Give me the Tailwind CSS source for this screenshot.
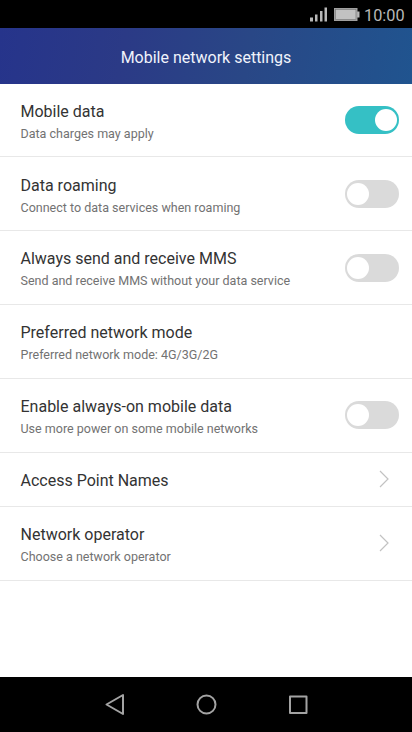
<!DOCTYPE html>
<html lang="en">
<head>
<meta charset="utf-8">
<title>Mobile network settings</title>
<script src="https://cdn.jsdelivr.net/npm/@tailwindcss/browser@4"></script>
</head>
<body class="w-[412px] h-[732px] overflow-hidden flex flex-col bg-white font-[Roboto,sans-serif]">
<div class="h-[28px] shrink-0 bg-black flex justify-end pr-[7px]">
  <svg class="w-[54px] h-[28px]" viewBox="310 0 54 28">
    <g fill="#b8b8b8"><rect x="310" y="17.500" width="3" height="4"/><rect x="315" y="14.500" width="2.500" height="7"/><rect x="320" y="11" width="2.500" height="10.500"/><rect x="324.500" y="7.500" width="2.500" height="14"/><rect x="357" y="11.500" width="2.500" height="6"/></g>
    <rect x="334.500" y="8.500" width="22.500" height="12" fill="#c2c2c2" stroke="#a0a0a0"/>
    <rect x="335.500" y="9.500" width="20.500" height="10" fill="none" stroke="#777" stroke-width=".7"/>
  </svg>
  <span class="w-[41px] whitespace-nowrap text-[16.300px] leading-[31px] text-[#b8b8b8]">10:00</span>
</div>
<header class="h-[55.500px] shrink-0 bg-linear-[100deg,#26348b_0%,#2b3a86_30%,#294786_60%,#20548f_100%] flex justify-center">
  <h1 class="text-[16px] leading-[59px] text-[#f0f3fb]">Mobile network settings</h1>
</header>
<main class="flex-1 flex flex-col text-[#333]">
  <section class="h-[73.850px] shrink-0 border-b border-[#e8e8e8] pl-[20.500px] pr-[13px] flex justify-between items-center">
    <div class="pt-[5px]"><h2 class="text-[16px] leading-[22px]">Mobile data</h2><p class="text-[12.520px] leading-[21px] text-[#727272]">Data charges may apply</p></div>
    <div class="w-[54px] h-[28px] rounded-full bg-[#35c0c5] flex items-center justify-end pr-[2.500px]"><span class="size-[22px] rounded-full bg-white"></span></div>
  </section>
  <section class="h-[73.850px] shrink-0 border-b border-[#e8e8e8] pl-[20.500px] pr-[13px] flex justify-between items-center">
    <div class="pt-[5px]"><h2 class="text-[16px] leading-[22px]">Data roaming</h2><p class="text-[12.520px] leading-[21px] text-[#727272]">Connect to data services when roaming</p></div>
    <div class="w-[54px] h-[28px] rounded-full bg-[#dadada] flex items-center pl-[2px]"><span class="size-[22px] rounded-full bg-white"></span></div>
  </section>
  <section class="h-[73.850px] shrink-0 border-b border-[#e8e8e8] pl-[20.500px] pr-[13px] flex justify-between items-center">
    <div class="pt-[4px]"><h2 class="text-[16px] leading-[22px]">Always send and receive MMS</h2><p class="text-[12.520px] leading-[21px] text-[#727272]">Send and receive MMS without your data service</p></div>
    <div class="w-[54px] h-[28px] rounded-full bg-[#dadada] flex items-center pl-[2px]"><span class="size-[22px] rounded-full bg-white"></span></div>
  </section>
  <section class="h-[73.850px] shrink-0 border-b border-[#e8e8e8] pl-[20.500px] pr-[13px] flex justify-between items-center">
    <div class="pt-[4px]"><h2 class="text-[16px] leading-[22px]">Preferred network mode</h2><p class="text-[12.520px] leading-[21px] text-[#727272]">Preferred network mode: 4G/3G/2G</p></div>
  </section>
  <section class="h-[73.850px] shrink-0 border-b border-[#e8e8e8] pl-[20.500px] pr-[13px] flex justify-between items-center">
    <div class="pt-[4px]"><h2 class="text-[16px] leading-[22px]">Enable always-on mobile data</h2><p class="text-[12.520px] leading-[21px] text-[#727272]">Use more power on some mobile networks</p></div>
    <div class="w-[54px] h-[28px] rounded-full bg-[#dadada] flex items-center pl-[2px]"><span class="size-[22px] rounded-full bg-white"></span></div>
  </section>
  <section class="h-[54px] shrink-0 border-b border-[#e8e8e8] pl-[20.500px] pr-[22px] flex justify-between items-center">
    <h2 class="text-[16px] leading-[22px] pt-[3px]">Access Point Names</h2>
    <svg class="w-[11px] h-[18px]" viewBox="0 0 11 18" fill="none" stroke="#c2c2c2" stroke-width="1.200"><path d="M1 1l8 8-8 8"/></svg>
  </section>
  <section class="h-[74px] shrink-0 border-b border-[#e8e8e8] pl-[20.500px] pr-[22px] flex justify-between items-center">
    <div class="pt-[5px]"><h2 class="text-[16px] leading-[22px]">Network operator</h2><p class="text-[12.520px] leading-[21px] text-[#727272]">Choose a network operator</p></div>
    <svg class="w-[11px] h-[18px]" viewBox="0 0 11 18" fill="none" stroke="#c2c2c2" stroke-width="1.200"><path d="M1 1l8 8-8 8"/></svg>
  </section>
</main>
<nav class="h-[55px] shrink-0 bg-black">
  <svg class="w-[412px] h-[55px]" viewBox="0 677 412 55" fill="none" stroke="#a3a3a3" stroke-width="2" stroke-linejoin="round"><path d="M106.500 704.500L123 695v19z"/><circle cx="206.500" cy="704.500" r="9"/><rect x="290" y="696.500" width="16.500" height="16.500"/></svg>
</nav>
</body>
</html>
